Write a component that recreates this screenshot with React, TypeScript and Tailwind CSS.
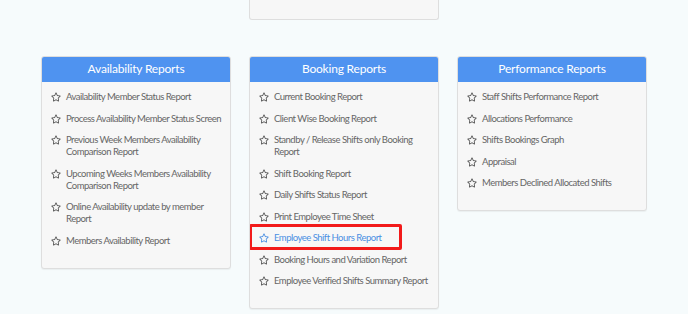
import { FaRegStar } from 'react-icons/fa';

type Report = { label: string; active?: boolean };

const availability: Report[] = [
  { label: 'Availability Member Status Report' },
  { label: 'Process Availability Member Status Screen' },
  { label: 'Previous Week Members Availability Comparison Report' },
  { label: 'Upcoming Weeks Members Availability Comparison Report' },
  { label: 'Online Availability update by member Report' },
  { label: 'Members Availability Report' },
];

const booking: Report[] = [
  { label: 'Current Booking Report' },
  { label: 'Client Wise Booking Report' },
  { label: 'Standby / Release Shifts only Booking Report' },
  { label: 'Shift Booking Report' },
  { label: 'Daily Shifts Status Report' },
  { label: 'Print Employee Time Sheet' },
  { label: 'Employee Shift Hours Report', active: true },
  { label: 'Booking Hours and Variation Report' },
  { label: 'Employee Verified Shifts Summary Report' },
];

const performance: Report[] = [
  { label: 'Staff Shifts Performance Report' },
  { label: 'Allocations Performance' },
  { label: 'Shifts Bookings Graph' },
  { label: 'Appraisal' },
  { label: 'Members Declined Allocated Shifts' },
];

export default function App() {
  return (
    <div className="min-h-[314px] bg-[#f6fbfc] font-['Lato',sans-serif]">
      <div className="grid grid-cols-[190px_190px_190px] gap-x-[18px] justify-center">
        <div className="col-start-2 h-[20px] bg-[#f7f7f7] border-x border-b border-[#dedede] rounded-b-[3px]" />
        <div className="col-span-3 h-[36px]" />
        <ReportCard title="Availability Reports" items={availability} />
        <ReportCard title="Booking Reports" items={booking} />
        <ReportCard title="Performance Reports" items={performance} />
      </div>
    </div>
  );
}

function ReportCard({ title, items }: { title: string; items: Report[] }) {
  return (
    <div className="self-start bg-[#f7f7f7] border border-[#dedede] rounded-[3px] shadow-[0_1px_1px_rgba(0,0,0,0.05)] overflow-hidden">
      <div className="h-[26px] bg-[#4f93f0] flex items-center justify-center -mx-px -mt-px rounded-t-[3px]">
        <span className="text-white text-[12px] tracking-[-0.2px]">{title}</span>
      </div>
      <ul className="flex flex-col gap-[9.5px] pt-[9px] pb-[21px] pl-[9px] pr-[2px]">
        {items.map((item) => (
          <li key={item.label} className="relative">
            {item.active && (
              <div className="absolute -left-[10px] -top-[8px] w-[153px] h-[26px] border-[3px] border-[#f21a1a] rounded-[2px]" />
            )}
            <div className={`flex items-start gap-[5px] text-[9.5px] tracking-[-0.5px] leading-[12px] ${item.active ? 'text-[#4a8fe3]' : 'text-[#666666]'}`}>
              <FaRegStar size={10} className={`shrink-0 mt-[1px] ${item.active ? 'text-[#4a8fe3]' : 'text-[#555555]'}`} />
              <span>{item.label}</span>
            </div>
          </li>
        ))}
      </ul>
    </div>
  );
}
